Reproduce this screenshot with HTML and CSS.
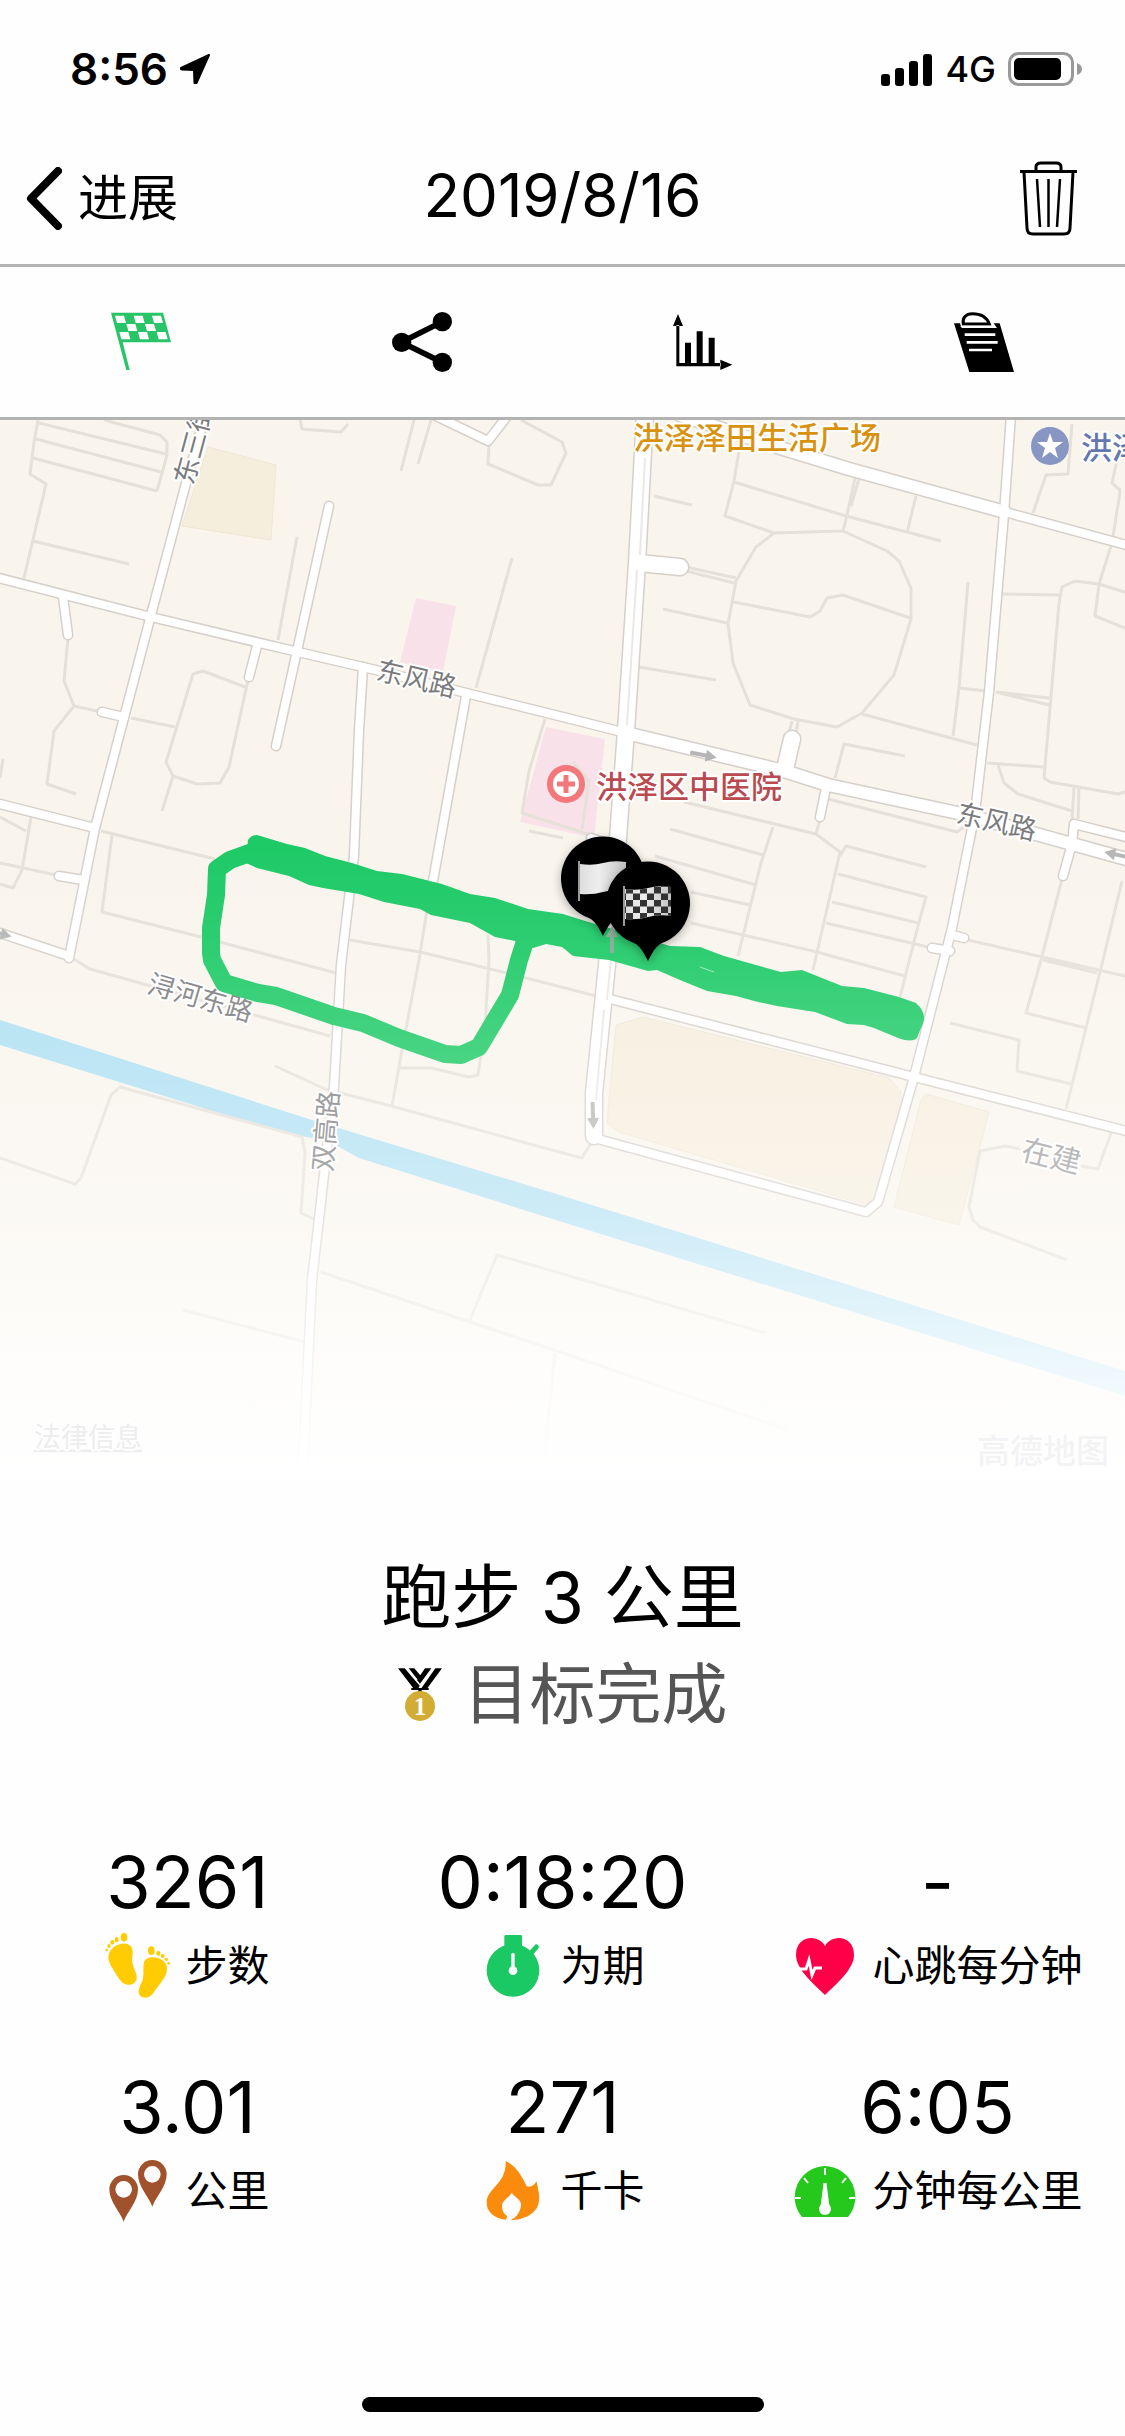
FILE: index.html
```html
<!DOCTYPE html>
<html lang="zh-CN">
	<head>
		<meta charset="utf-8">
		<meta name="viewport" content="width=device-width">
		<title>2019/8/16</title>
		<link rel="stylesheet" href="styles.css">
	</head>
	<body>
		<div class="status">
			<span class="clock">8:56
				<svg class="location" viewBox="0 0 30 30"><path d="M29 1L1 14q-1 1 1 1.500L14 16l.5 13q1 2 2 0z" stroke="#000" stroke-width="2" stroke-linejoin="round"/></svg>
			</span>
			<span class="signal">
				<svg class="bars" viewBox="0 0 52 33"><rect y="21" width="9" height="12" rx="3"/><rect x="14" y="15" width="9" height="18" rx="3"/><rect x="28" y="8" width="9" height="25" rx="3"/><rect x="42" y="1" width="9" height="32" rx="3"/></svg>
				<span>4G</span>
				<svg class="battery" viewBox="0 0 74 34"><rect x="1.500" y="1.500" width="63" height="31" rx="9" fill="none" stroke="#999" stroke-width="3"/><rect x="6" y="6" width="47" height="22" rx="5"/><path d="M69 11q5 2 5 6t-5 6z" fill="#999"/></svg>
			</span>
		</div>
		<header class="bar">
			<a class="back" href="#progress">
				<svg viewBox="0 0 36 63"><path d="M32 4L5 31.500 32 59" fill="none" stroke="#000" stroke-width="8" stroke-linecap="round" stroke-linejoin="round"/></svg>
				进展
			</a>
			<h1>2019/8/16</h1>
			<button class="trash" type="button" aria-label="删除">
				<svg viewBox="0 0 57 75"><g fill="none" stroke="#000" stroke-width="3"><path d="M0 10.500h57M16 10V6q0-4 5-4h15q5 0 5 4v4M4 11l3 56q0 6 6 6h31q6 0 6-6l3-56"/><path d="M17 18l3 48M28.500 18v48M40 18l-3 48" stroke-width="2.500"/></g></svg>
			</button>
		</header>
		<nav class="tabs">
			<button type="button" aria-label="概览" class="active">
				<svg viewBox="0 0 180 180"><path fill="#27c468" d="M0 2h156l24 89H35l21 83H46z"/><path fill="#fff" d="M12 11h27l6 22H18zM68 11h27l6 22H74zM123 11h27l6 22h-27zM46 36h27l6 21H52zM102 36h27l6 21h-27zM25 60h27l6 22H31zM81 60h27l6 22H87zM137 60h27l6 22h-27z"/></svg>
			</button>
			<button type="button" aria-label="分享">
				<svg viewBox="0 0 180 180"><path d="M151 29L28 91l123 60" fill="none" stroke="#000" stroke-width="17"/><circle cx="151" cy="29" r="29"/><circle cx="29" cy="91" r="29"/><circle cx="151" cy="151" r="29"/></svg>
			</button>
			<button type="button" aria-label="图表">
				<svg viewBox="0 0 180 180"><path d="M15 6L0 42h30zM178 158l-36-15v31zM10 40h9v113h125v10H10zM36 92h18v64H36zM71 58h18v98H71zM107 77h18v79h-18z"/></svg>
			</button>
			<button type="button" aria-label="备注">
				<svg viewBox="0 0 180 180"><path d="M0 34h18l5 14h106l-10-14h18l43 146H46z"/><path d="M28 36C24 18 36 5 55 5c26 0 44 12 51 31z" fill="#fff" stroke="#000" stroke-width="9"/><path d="M20 43h96" stroke="#fff" stroke-width="4"/><path d="M32 68h92M38 91h93M45 114h69" stroke="#fff" stroke-width="8"/></svg>
			</button>
		</nav>

		<svg class="map" viewBox="0 0 1125 1060" preserveAspectRatio="xMidYMin slice">
			<defs>
				<linearGradient id="fade" x1="0" y1="0" x2="0" y2="1">
					<stop offset=".38" stop-color="#fff" stop-opacity="0"/>
					<stop offset=".49" stop-color="#fff" stop-opacity=".08"/>
					<stop offset=".6" stop-color="#fff" stop-opacity=".2"/>
					<stop offset=".75" stop-color="#fff" stop-opacity=".4"/>
					<stop offset=".9" stop-color="#fff" stop-opacity=".8"/>
					<stop offset="1" stop-color="#fff"/>
				</linearGradient>
				<linearGradient id="cloth">
					<stop offset="0" stop-color="#ddd"/>
					<stop offset=".4" stop-color="#eee"/>
					<stop offset="1" stop-color="#c4c4c4"/>
				</linearGradient>
				<pattern id="checks" x="-22" y="-16" width="14" height="13" patternUnits="userSpaceOnUse">
					<path fill="#333" d="M0 0h7v6.500H0zM7 6.500h7V13H7z"/>
				</pattern>
				<path id="pin" d="M0 58C-5 48-8 43-14 40A42 42 0 1 1 14 40C8 43 5 48 0 58Z"/>
				<path id="flag" d="M-23-14Q-10-12 0-15T23-16V13Q10 11 0 14T-23 16Z"/>
				<path id="arrow" d="M-13-2H3V-6L14 0 3 6V2H-13Z"/>
				<!-- roads are drawn twice: grey casing, then white on top -->
				<g id="roads-wide">
					<path d="M645-5L637 143 626 311 618 418 607 545 594 673V716"/>
					<path d="M639 143L680 147M792 319L785 349"/>
				</g>
				<g id="roads-main">
					<path d="M626 313L784 351 828 365 967 395 1072 424 1130 440"/>
					<path d="M680-5L777 27 849 49 1005 92"/>
				</g>
				<g id="roads">
					<path d="M205-5L185 67 151 195 95 408 69 538M0 513L69 536M0 384L95 408"/>
					<path d="M-5 157L151 197 298 232 380 251 470 274 563 297 626 313"/>
					<path d="M63 177L68 215M257 226L249 257M329 86L276 326M102 292L124 297M59 456L83 460"/>
					<path d="M363 247L359 311 354 436 341 545 334 667 312 860 303 1045M466 276L433 461"/>
					<path d="M434-5L488 21 508-5M1005 92L1130 126"/>
					<path d="M1011-5L1004 94 989 272 975 393 952 508 914 657 878 782 866 792 594 718"/>
					<path d="M610 579L914 657 1130 712M826 368L820 397M952 515L964 518M950 531L932 528"/>
					<path d="M1130 418L1074 404 1072 424 1063 456M591 418L612 425"/>
				</g>
			</defs>

			<rect width="1125" height="1060" fill="#f9f5ed"/>
			<path class="plot" d="M208 27L276 45 271 120 182 106ZM616 605L643 597 889 658 901 672V690L878 773 867 785 619 712 607 703ZM921 680L926 674 989 692 959 805 894 787Z"/>
			<path fill="#f9e1ea" d="M416 178L456 186 443 252 400 242ZM546 307L605 319 594 418 520 402Z"/>
			<path fill="#addff2" d="M0 600L312 700 563 776 1125 951V976L562 802 359 738 339 727 312 718 280 712 0 625Z"/>

			<g class="lanes">
				<path d="M38 0L34 22 30 54 46 64 24 158M39 3L166 34M36 19L161 52M33 38L157 71M104 0L160 15 167 22V35L157 71M33 121L129 144"/>
				<path d="M300 0L302 9 341 12 348 4M414 0L401 51M431 0L418 44M489 25L488 44 538 65H551L566 33 562 22 521 0M297 117L278 220M512 138L476 268"/>
				<path d="M68 218L64 261 74 286 54 311 47 364 76 374M74 286L101 292M131 298L175 307"/>
				<path d="M245 267L203 251 193 254 166 342 173 356 197 364 220 363 229 347 248 260M173 356L162 391M3 339L0 358"/>
				<path d="M0 397L26 411M31 397L22 450 13 468 0 464M0 443L56 455M101 411L215 439M112 415L102 492 201 517 336 553"/>
				<path d="M350 520L420 532 503 552 596 576M427 490L419 540 402 630 392 686M488 515L489 540 485 607 478 655 469 657 431 648H400"/>
				<path d="M545 299L529 351 522 393 591 415M573 342L589 361 582 409M529 411L563 418"/>
				<path d="M72 538L90 549 147 565 330 616M275 646L325 669 391 686 563 733 582 738 591 723"/>
				<path d="M0 738L75 764 81 758 111 675 120 667 302 717 305 733 301 793 314 799M321 852L467 901 563 933 788 1010M470 900L497 835 563 854 765 913M183 890L305 922M555 933L544 1040"/>
				<path d="M686 147L736 158M686 151L734 163M654 76L692 85M739 31L734 61 725 96 774 113 843 111M734 62L846 96 941 121M855 58L847 95 843 111M859 59L851 86M916 76L907 113"/>
				<path d="M774 113L756 127 736 161 728 204 733 243 750 285 794 299 837 307 862 293 894 255 911 199V168L899 141 887 131 843 111M734 182L810 197 820 191 827 178 843 175 910 198"/>
				<path d="M663 189L727 203M639 247L716 260M968 162L959 268 953 316M959 268L986 271M862 294L977 325M996 272L1049 285M996 272L1049 278M1002 174L1060 175"/>
				<path d="M1125 172L1099 164 1075 161 1062 167 1059 183 1044 358 1050 362 1118 374 1125 372M1111 126L1099 164 1095 196 1125 208M1072 4L1068 54 1046 55 1033 93M1117 40L1112 63 1120 70 1119 79 1113 116"/>
				<path d="M987 343L1043 347M998 345L1004 363 1018 374 1072 391M1074 368L1072 400M1079 368L1078 399M792 301L789 313M798 301L796 315"/>
				<path d="M820 400L816 414 840 432 813 550M905 336L844 324 835 358M828 379L957 412 968 404M684 382L816 414M773 407L761 443 738 536M670 409L763 435M655 436L756 465M691 472L750 485M691 503L813 531 905 556"/>
				<path d="M840 436L846 426 926 447M838 454L926 477 919 502 900 577M832 482L918 503M826 503L928 527M968 520L1125 556M1062 459L1041 540 1026 593 1086 608 1066 689M1043 540L1097 553M1122 461L1103 540 1086 608"/>
				<path d="M950 603L1019 620 1017 651 1071 664M1020 729L1005 726 980 731 969 787 973 800 980 807 1067 840M1081 746L1098 749 1111 713"/>
			</g>

			<g class="casing"><use href="#roads-wide" stroke-width="19"/><use href="#roads-main" stroke-width="15"/><use href="#roads" stroke-width="11"/></g>
			<g class="surface"><use href="#roads-wide" stroke-width="16"/><use href="#roads-main" stroke-width="12"/><use href="#roads" stroke-width="8"/></g>
			<path fill="none" stroke="#ebe7e5" stroke-width="2" d="M645 38L640 135M637 150L627 305M612 530L607 580M604 590L596 680"/>

			<g fill="#b5b5b5">
				<use href="#arrow" transform="translate(703 335) rotate(11)"/>
				<use href="#arrow" transform="translate(1118 435) rotate(192)"/>
				<use href="#arrow" transform="translate(-2 513) rotate(14)"/>
				<use href="#arrow" transform="translate(593 695) rotate(88)"/>
			</g>

			<g class="labels">
				<text transform="translate(192 24) rotate(-75)">东三街</text>
				<text transform="translate(417 257) rotate(13)">东风路</text>
				<text transform="translate(997 400) rotate(13)">东风路</text>
				<text transform="translate(201 576) rotate(16)">浔河东路</text>
				<text transform="translate(324 711) rotate(-85)">双高路</text>
				<text class="area" transform="translate(1052 734) rotate(14)">在建</text>
			</g>
			<g class="places">
				<text class="mall" x="633" y="15">洪泽泽田生活广场</text>
				<text class="office" x="1081" y="25">洪泽区</text>
				<text class="hospital" x="596" y="364">洪泽区中医院</text>
			</g>
			<circle cx="1050" cy="26" r="19" fill="#8796c2"/>
			<path fill="#fff" d="M1050 13l3 9h10l-8 6 3 10-8-6-8 6 3-10-8-6h10z"/>
			<circle cx="566" cy="364" r="19" fill="#f3777b"/>
			<circle cx="566" cy="364" r="13" fill="#fff"/>
			<path stroke="#f3777b" stroke-width="5" d="M566 355v18M557 364h18"/>

			<path fill="none" stroke="#1ac964" stroke-width="18" stroke-linejoin="round" d="M255 431L230 440 217 449 216 475 211 508V533L212 540 224 563 258 573 276 576 334 596 363 603 399 618 445 634 461 635 479 627 510 575 519 540 528 512"/>
			<path fill="#1ac964" d="M248 420Q251 415 257 415L287 424 305 428 325 436 352 443 377 451 402 454 442 464 470 474 495 478 528 489 563 494 582 500 670 526 700 527 724 536 781 552 802 550 842 566 864 568 899 577 916 583Q927 593 923 603L917 618Q912 623 898 618L874 608 864 605 847 604 815 592 777 586 758 582 736 576 707 571 680 560 657 550 648 551 609 540 573 536 562 527 546 524 533 528 515 521 495 517 470 503 431 495 420 489 384 482 359 474 323 468 309 465 289 456 257 448 246 443Z"/>
			<path stroke="#9be6bd" stroke-width="1" d="M700 547L714 552"/>

			<rect width="1125" height="1060" fill="url(#fade)"/>

			<g class="pin" transform="translate(603 458)">
				<use href="#pin"/>
				<use href="#flag" fill="url(#cloth)"/>
				<path stroke="#999" stroke-width="2" d="M-24-17V23"/>
			</g>
			<use href="#arrow" fill="#8fae9c" transform="translate(612 520) rotate(-90)"/>
			<g class="pin" transform="translate(648 483)">
				<use href="#pin"/>
				<use href="#flag" fill="url(#cloth)"/>
				<use href="#flag" fill="url(#checks)"/>
				<path stroke="#999" stroke-width="2" d="M-24-17V23"/>
			</g>

			<a class="legal" href="#legal"><text x="34" y="1015">法律信息</text></a>
			<text class="credit" x="977" y="1029">高德地图</text>
		</svg>

		<main>
			<h2>跑步 3 公里</h2>
			<p class="goal">
				<svg viewBox="0 0 132 157"><path d="M0 0h20l45 52-4 8H46zM32 0h17l27 32-9 12zM81 0h19L66 46l-9-11zM112 0h20L88 60H70z"/><path d="M40 59h52v6H40zM61 64h10v8H61z"/><circle cx="66" cy="113" r="45" fill="#d1ad36"/><text x="66" y="139">1</text></svg>
				目标完成
			</p>
			<dl class="stats">
				<div>
					<dd>3261</dd>
					<dt>
						<svg viewBox="0 0 198 198" fill="#ffcc04"><path d="M10 72C12 45 40 30 62 32c18 2 24 18 20 38-4 30 13 45 13 62 0 18-15 26-29 23-21-5-31-30-41-45-10-15-15-25-15-38zM118 85c7-15 32-15 52-5 18 10 20 30 10 50-15 25-25 35-35 50-10 15-30 20-41 7-9-15 4-32 9-47 5-20-1-35 5-55z"/><ellipse cx="57" cy="13" rx="10" ry="13"/><ellipse cx="35" cy="20" rx="6" ry="8"/><ellipse cx="22" cy="28" rx="6" ry="7"/><ellipse cx="12" cy="39" rx="5" ry="6"/><circle cx="5" cy="51" r="4"/><ellipse cx="139" cy="53" rx="10" ry="13"/><ellipse cx="160" cy="61" rx="6" ry="8"/><circle cx="173" cy="69" r="6"/><circle cx="184" cy="79" r="5"/><circle cx="191" cy="91" r="4"/></svg>
						步数
					</dt>
				</div>
				<div>
					<dd>0:18:20</dd>
					<dt>
						<svg viewBox="-20 -6 198 198" fill="#1ac964"><circle cx="79" cy="106" r="79"/><rect x="53" width="53" height="40" rx="4"/><path d="M132 56l17-20" stroke="#1ac964" stroke-width="15" stroke-linecap="round"/><path d="M79 58v42" stroke="#fff" stroke-width="10" stroke-linecap="round"/><circle cx="79" cy="107" r="13" fill="#fff"/></svg>
						为期
					</dt>
				</div>
				<div>
					<dd>-</dd>
					<dt>
						<svg viewBox="-4 -5 66 66"><path fill="#ff0048" d="M29 57C20 48 0 32 0 17 0 5 8 0 15 0c7 0 12 4 14 8 2-4 7-8 14-8 7 0 15 5 15 17 0 15-20 31-29 40z"/><path d="M2 31h8l3-9 3 15 3-7h7" fill="none" stroke="#fff" stroke-width="3"/></svg>
						心跳每分钟
					</dt>
				</div>
				<div>
					<dd>3.01</dd>
					<dt>
						<svg viewBox="-13 -6 198 198" fill="#a0522d"><path fill-rule="evenodd" d="M43 185C32 155 0 125 0 88a43 43 0 0 1 86 0c0 37-32 67-43 97zM43 63a25 25 0 1 0 0 50 25 25 0 1 0 0-50zM129 140C118 110 86 80 86 43a43 43 0 0 1 86 0c0 37-32 67-43 97zM129 18a25 25 0 1 0 0 50 25 25 0 1 0 0-50z"/></svg>
						公里
					</dt>
				</div>
				<div>
					<dd>271</dd>
					<dt>
						<svg viewBox="-20 -9 198 198" fill="#fb8b0c"><path d="M57 0c33 15 48 45 63 76 13 4 25-4 29-16 6 25 11 45 7 65-6 35-51 53-84 52 18-7 31-27 31-47 0-15-18-20-28-35-10 17-29 23-29 40 0 15 6 25 16 30l-4 11C20 172 0 150 0 125 0 80 60 70 57 0z"/></svg>
						千卡
					</dt>
				</div>
				<div>
					<dd>6:05</dd>
					<dt>
						<svg viewBox="-2 -8 66 66"><path fill="#24c91b" d="M31 0a31 31 0 0 1 23 51H8A31 31 0 0 1 31 0z"/><path d="M31 2v7M10 12l4 5M52 12l-4 5M1 32h6M61 32h-6" stroke="#fff" stroke-width="2"/><path fill="#fff" d="M29.500 17h3l3 24h-9z"/><circle cx="31" cy="43" r="6" fill="#fff"/></svg>
						分钟每公里
					</dt>
				</div>
			</dl>
		</main>
		<div class="home"></div>
	</body>
</html>
```
FILE: styles.css
```css
* {
	box-sizing:border-box;
}
body {
	margin:0;
	min-height:100vh;
	display:flex;
	flex-direction:column;
	background:#fefefe;
	color:#000;
	font-family:Inter, "Noto Sans CJK SC", sans-serif;
}
svg {
	display:block;
	flex:none;
}
button {
	padding:0;
	border:0;
	background:none;
}
h1,
h2,
p,
dl,
dd {
	margin:0;
	font-weight:400;
}

/* status bar */
.status {
	height:132px;
	padding:6px 43px 0 70px;
	display:flex;
	justify-content:space-between;
	align-items:center;
	font-size:44px;
	font-weight:600;
}
.clock,
.signal {
	display:flex;
	align-items:center;
	gap:12px;
}
.signal {
	font-size:36px;
	font-weight:500;
}
.location {
	width:30px;
	height:30px;
}
.bars {
	width:52px;
	height:33px;
}
.battery {
	width:74px;
	height:34px;
}

/* title bar */
.bar {
	height:135px;
	padding:0 26px;
	display:grid;
	grid-template-columns:1fr auto 1fr;
	align-items:center;
	border-bottom:3px solid #b3b3b3;
}
.bar h1 {
	padding-bottom:6px;
	font-size:60px;
	line-height:72px;
}
.back {
	display:flex;
	align-items:center;
	gap:16px;
	color:#000;
	font-size:50px;
	line-height:64px;
	text-decoration:none;
}
.back svg {
	width:36px;
	height:63px;
}
.trash {
	justify-self:end;
	margin-right:22px;
}
.trash svg {
	width:57px;
	height:75px;
}

.tabs {
	height:153px;
	display:grid;
	grid-template-columns:repeat(4, 1fr);
	border-bottom:3px solid #b3b3b3;
}
.tabs button {
	display:flex;
	align-items:center;
	justify-content:center;
}
.tabs svg {
	width:60px;
	height:60px;
}

/* map */
.map {
	width:100%;
}
.plot {
	fill:#f6eedd;
	stroke:#efe6d4;
}
.lanes {
	fill:none;
	stroke:#e5e0d8;
	stroke-width:3;
	stroke-linejoin:round;
}
.casing,
.surface {
	fill:none;
	stroke:#d6cfca;
	stroke-linecap:round;
	stroke-linejoin:round;
}
.surface {
	stroke:#fff;
}
.map text {
	dominant-baseline:central;
	font-family:"Noto Sans CJK SC", sans-serif;
	paint-order:stroke;
	stroke:#fff;
	stroke-width:4px;
	stroke-linejoin:round;
}
.labels text {
	fill:#7b7b7e;
	font-size:27px;
	text-anchor:middle;
}
.labels .area {
	fill:#999;
	font-size:30px;
}
.places text {
	font-size:31px;
	font-weight:500;
}
.places .mall {
	fill:#d9920f;
}
.places .office {
	fill:#6577b0;
}
.places .hospital {
	fill:#b94a50;
}
.pin {
	filter:drop-shadow(0 3px 5px rgba(0, 0, 0, .3));
}
.map .legal text {
	fill:#ededed;
	font-size:27px;
	text-decoration:underline;
}
.map .credit {
	fill:#f3f3f3;
	font-size:33px;
	font-weight:500;
}

/* summary */
main {
	padding:70px 0 60px;
}
h2 {
	font-size:70px;
	line-height:96px;
	text-align:center;
}
.goal {
	display:flex;
	align-items:center;
	justify-content:center;
	gap:22px;
	color:#555;
	font-size:66px;
	line-height:96px;
}
.goal svg {
	width:44px;
	height:53px;
}
.goal text {
	fill:#fff;
	font:bold 76px "Liberation Serif", serif;
	text-anchor:middle;
}
.stats {
	margin-top:98px;
	display:grid;
	grid-template-columns:repeat(3, 1fr);
	row-gap:57px;
}
.stats div {
	display:flex;
	flex-direction:column;
}
.stats dd {
	font-size:72px;
	line-height:84px;
	text-align:center;
}
.stats dt {
	display:flex;
	align-items:center;
	justify-content:center;
	gap:14px;
	font-size:42px;
	line-height:84px;
	white-space:nowrap;
}
.stats svg {
	width:66px;
	height:66px;
}

.home {
	width:402px;
	height:15px;
	margin:auto auto 24px;
	border-radius:8px;
	background:#000;
}
```
